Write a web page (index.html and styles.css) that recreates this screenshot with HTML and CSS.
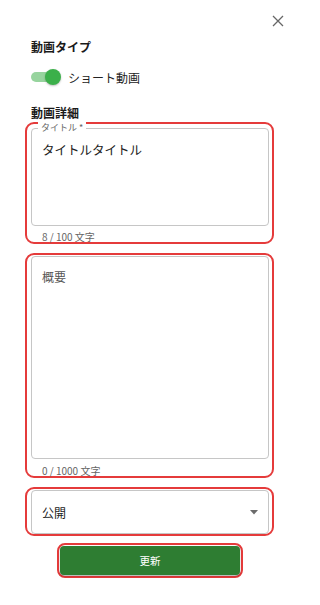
FILE: index.html
```html
<!DOCTYPE html>
<html lang="ja">
<head>
<meta charset="utf-8">
<link rel="stylesheet" href="styles.css">
</head>
<body>
<div class="dialog">
  <div class="close-row">
    <svg class="close" width="12" height="12" viewBox="0 0 12 12"><path d="M1 1L11 11M11 1L1 11" stroke="#666" stroke-width="1.3" fill="none"/></svg>
  </div>
  <div class="content">
    <h2 class="section first">動画タイプ</h2>
    <div class="toggle-row">
      <span class="switch"><span class="track"></span><span class="thumb"></span></span>
      <span class="toggle-label">ショート動画</span>
    </div>
    <h2 class="section second">動画詳細</h2>

    <div class="frame frame-title">
      <div class="field field-title">
        <span class="legend">タイトル *</span>
        <div class="value">タイトルタイトル</div>
      </div>
      <div class="helper">8 / 100 文字</div>
    </div>

    <div class="frame frame-desc">
      <div class="field field-desc">
        <div class="placeholder">概要</div>
      </div>
      <div class="helper helper-desc">0 / 1000 文字</div>
    </div>

    <div class="frame frame-select">
      <div class="field field-select">
        <span class="select-value">公開</span>
        <svg class="arrow" width="8" height="5" viewBox="0 0 8 5"><path d="M0 0H8L4 4.5Z" fill="#6b6b6b"/></svg>
      </div>
    </div>

    <div class="btn-frame">
      <button class="btn">更新</button>
    </div>
  </div>
</div>
</body>
</html>
```

FILE: styles.css
```css
* { box-sizing: border-box; }
html, body { margin: 0; padding: 0; background: #fff; }
body {
  font-family: "Noto Sans CJK JP", "Noto Sans", sans-serif;
  color: #222;
  width: 300px;
}
.dialog { width: 300px; }
.close-row {
  display: flex;
  justify-content: flex-end;
  padding: 15px 16px 0 0;
  height: 27px;
}
.close { display: block; }
.content { padding: 0 26px 0 25px; }
.section {
  margin: 0;
  padding-left: 6px;
  font-size: 12px;
  line-height: 18px;
  font-weight: 700;
  color: #1a1a1a;
}
.section.first { margin-top: 11px; }
.section.second { margin-top: 17px; }
.toggle-row {
  margin-top: 11px;
  height: 20px;
  padding-left: 6px;
  display: flex;
  align-items: center;
}
.switch {
  position: relative;
  width: 30px;
  height: 20px;
  display: inline-block;
}
.track {
  position: absolute;
  left: 0;
  top: 5px;
  width: 28px;
  height: 10px;
  border-radius: 5px;
  background: #97d49e;
}
.thumb {
  position: absolute;
  left: 14px;
  top: 2px;
  width: 16px;
  height: 16px;
  border-radius: 50%;
  background: #3bb04a;
  box-shadow: 0 1px 2px rgba(0,0,0,0.25);
}
.toggle-label {
  margin-left: 7px;
  font-size: 12px;
  color: #222;
}
.frame {
  border: 2px solid #e53b3b;
  border-radius: 9px;
  padding: 0 3px 0 4px;
}
.frame-title { padding-top: 4px; }
.frame-desc { margin-top: 9px; padding-top: 1px; }
.frame-select { margin-top: 9px; padding-top: 1px; padding-bottom: 0; }
.field {
  position: relative;
  border: 1px solid #c6c6c6;
  border-radius: 4px;
}
.field-title { height: 98px; padding: 12px 10px 0; }
.legend {
  position: absolute;
  top: -7px;
  left: 6px;
  padding: 0 3px;
  background: #fff;
  font-size: 9px;
  line-height: 11px;
  color: #666;
}
.value {
  font-size: 12.5px;
  line-height: 18px;
  color: #222;
}
.helper {
  margin-top: 5px;
  padding-left: 11px;
  font-size: 10px;
  line-height: 11px;
  color: #666;
}
.helper-desc { margin-top: 6px; }
.field-desc { height: 203px; padding: 11px 10px 0; }
.placeholder {
  font-size: 12px;
  line-height: 18px;
  color: #555;
}
.field-select {
  height: 44px;
  display: flex;
  align-items: center;
  justify-content: space-between;
  padding: 0 10px 0 10px;
}
.select-value { font-size: 12px; color: #222; }
.arrow { display: block; margin-right: 0; }
.btn-frame {
  margin: 7px 0 0 32px;
  width: 186px;
  border: 2px solid #e53b3b;
  border-radius: 8px;
  padding: 1px;
}
.btn {
  display: block;
  width: 180px;
  height: 29px;
  border: none;
  border-radius: 4px;
  background: #2e7d32;
  color: #fff;
  font-family: "Noto Sans CJK JP", "Noto Sans", sans-serif;
  font-size: 10.5px;
  box-shadow: 0 1px 2px rgba(0,0,0,0.35);
  padding: 0;
}
```
